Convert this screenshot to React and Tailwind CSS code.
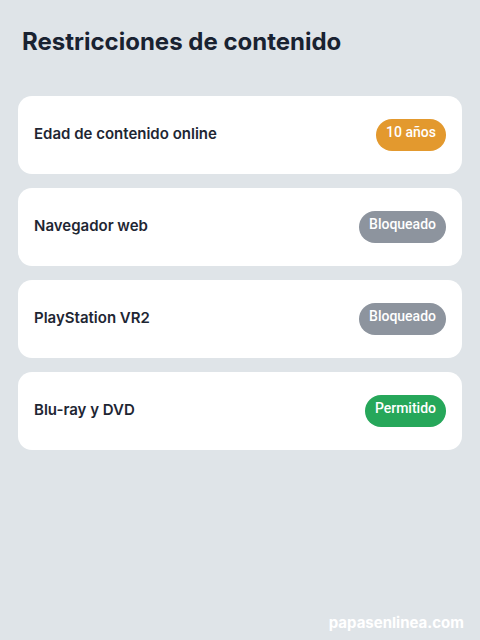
const rows = [
  { label: 'Edad de contenido online', value: '10 años', color: 'bg-[#e3992e]' },
  { label: 'Navegador web', value: 'Bloqueado', color: 'bg-[#8d949e]' },
  { label: 'PlayStation VR2', value: 'Bloqueado', color: 'bg-[#8d949e]' },
  { label: 'Blu-ray y DVD', value: 'Permitido', color: 'bg-[#26a75a]' },
]

export default function App() {
  return (
    <div className="w-[480px] h-[640px] bg-[#dfe4e8] flex flex-col font-['Inter',sans-serif]">
      <h1 className="px-[22px] pt-[27px] text-[24px] leading-[30px] font-bold text-[#192231]">
        Restricciones de contenido
      </h1>
      <div className="flex flex-col gap-[14px] px-[18px] mt-[39px]">
        {rows.map((r) => (
          <div key={r.label} className="h-[78px] bg-white rounded-[14px] flex items-center justify-between px-4">
            <span className="text-[15px] font-semibold text-[#1e2633] pb-[2px]">{r.label}</span>
            <span className={`${r.color} h-8 mb-[1px] rounded-full px-[10px] pb-[5px] flex items-center text-white text-[14px] font-medium font-['Roboto',sans-serif]`}>
              {r.value}
            </span>
          </div>
        ))}
      </div>
      <div className="mt-auto pb-[6px] pr-4 text-right text-white text-[15px] font-bold">
        papasenlinea.com
      </div>
    </div>
  )
}
